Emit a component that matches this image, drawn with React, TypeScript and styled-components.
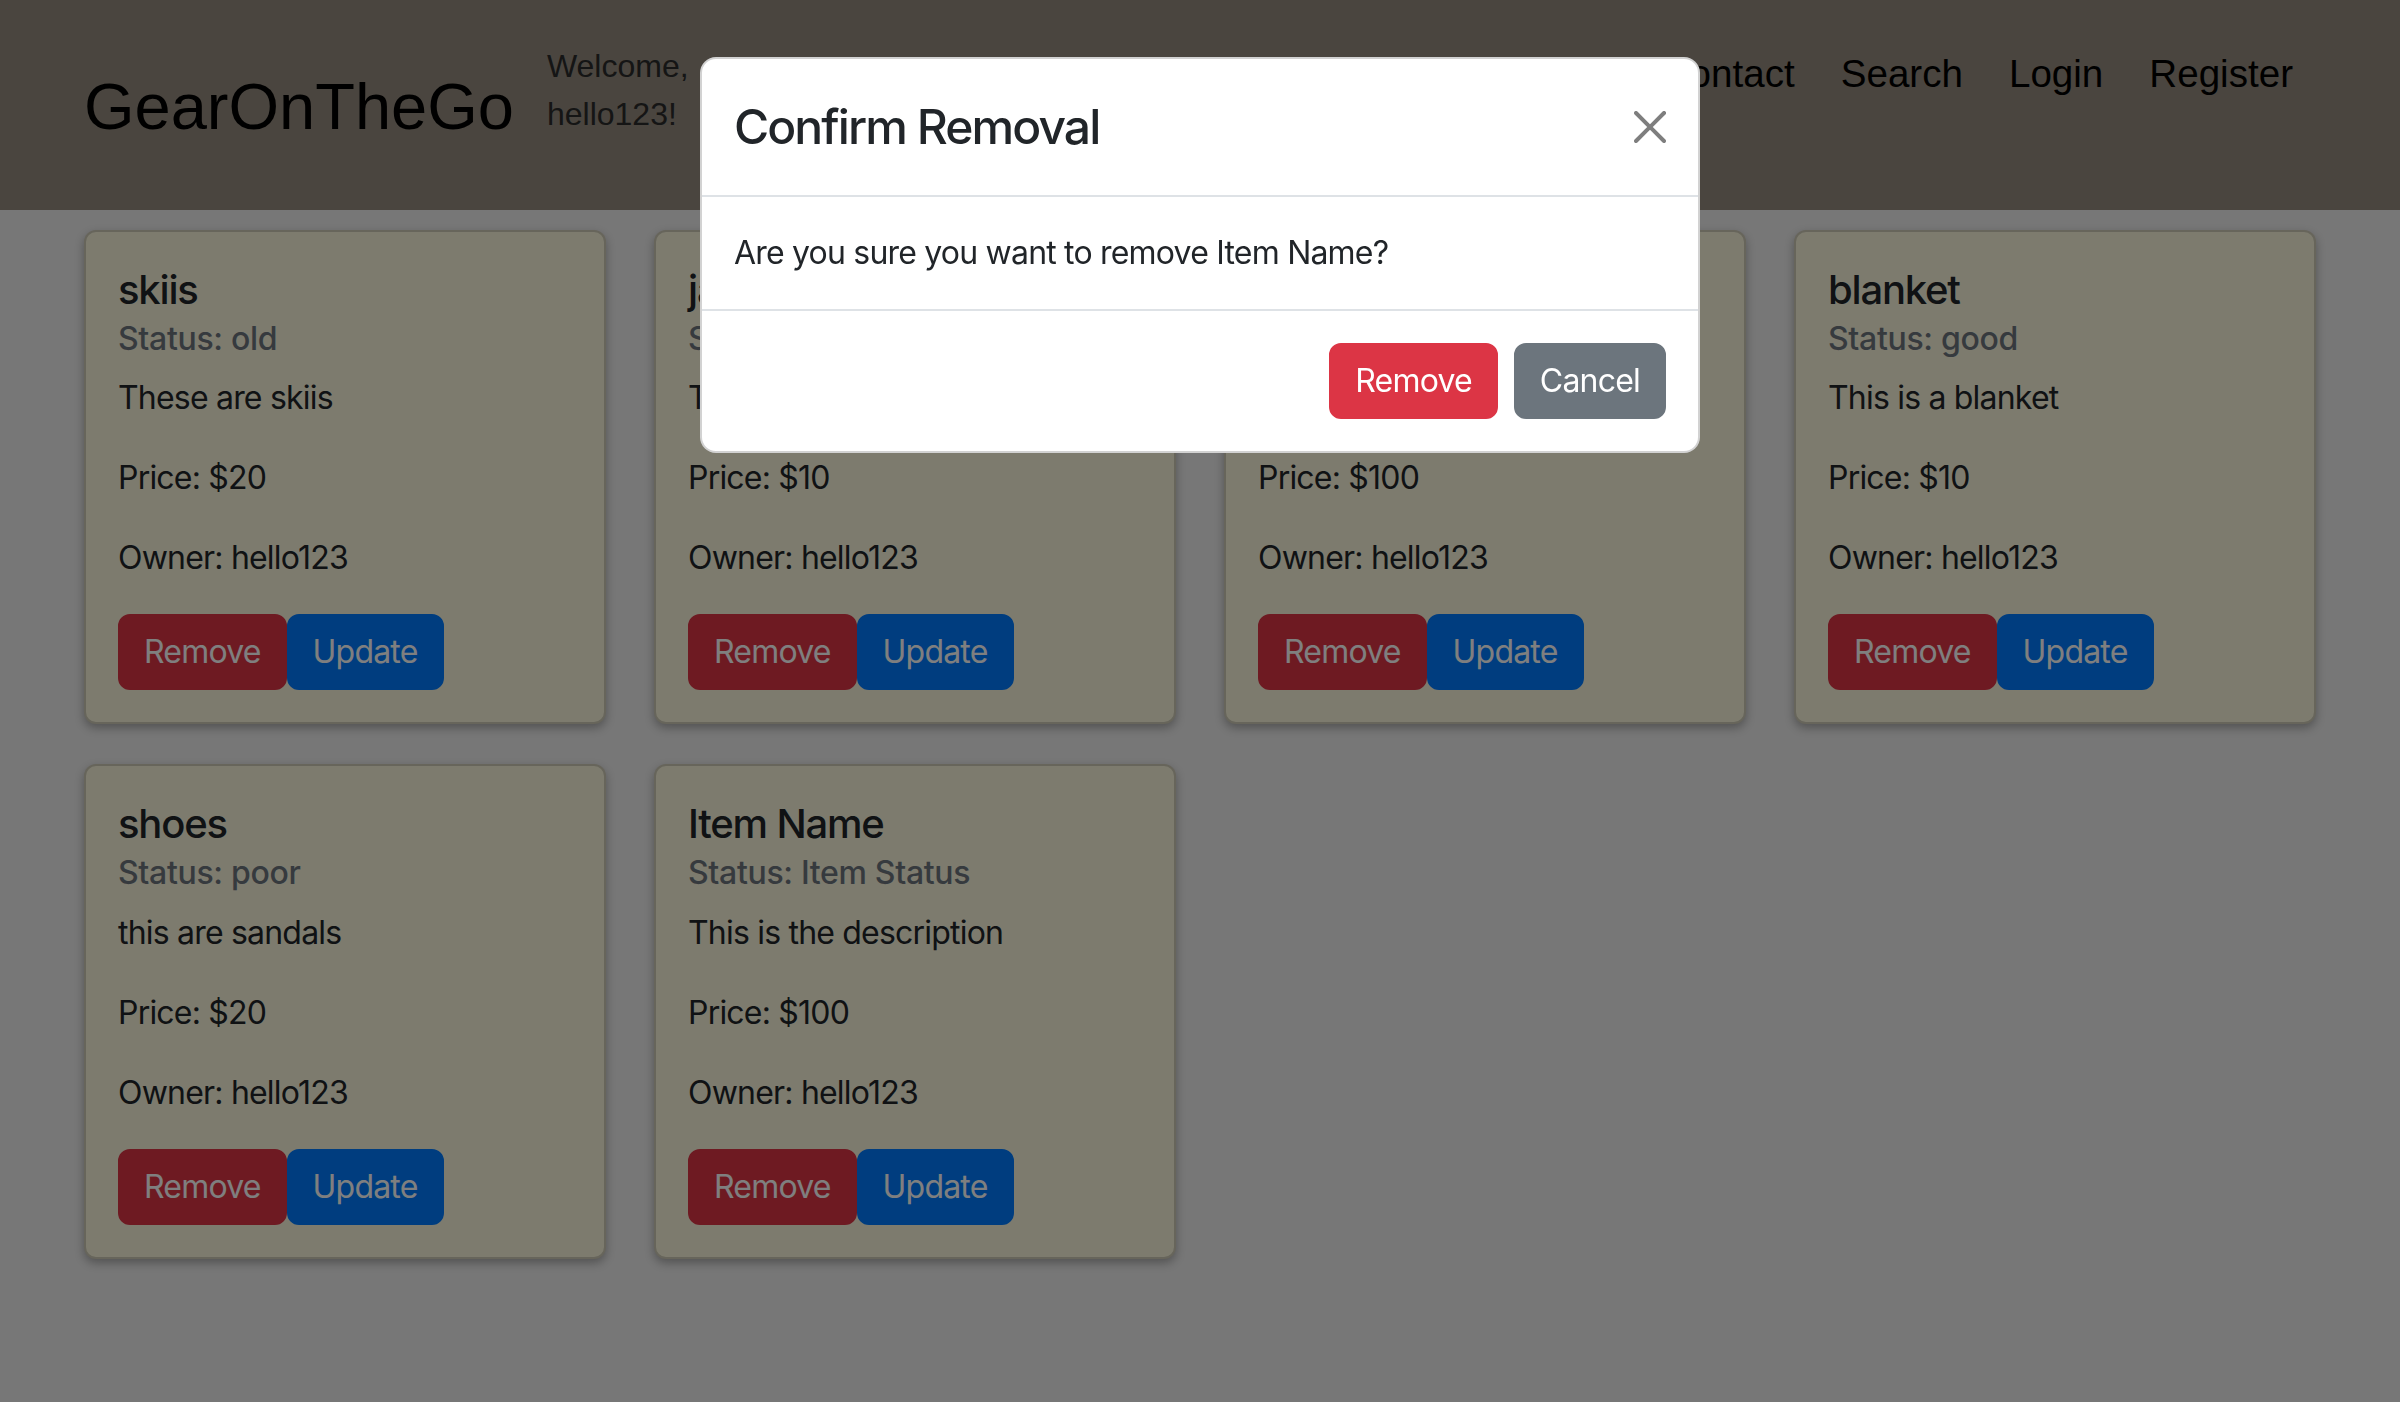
import React from "react";
import styled, { createGlobalStyle } from "styled-components";

const GlobalStyle = createGlobalStyle`
  html, body {
    margin: 0;
    padding: 0;
  }
  body {
    background: #eeeeee;
    color: #212529;
    font-family: Inter, "Noto Sans", "Liberation Sans", sans-serif;
    font-size: 32px;
    line-height: 1.5;
    letter-spacing: -0.025em;
  }
  * { box-sizing: border-box; }
`;

const Header = styled.header`
  height: 210px;
  background: #948a7e;
  display: flex;
  align-items: flex-start;
  padding: 0 84px;
  font-family: "Liberation Sans", Arial, sans-serif;
  letter-spacing: 0;
`;

const Logo = styled.div`
  align-self: center;
  margin-top: 4px;
  font-size: 65px;
  line-height: 1.2;
  color: #000;
  white-space: nowrap;
`;

const Welcome = styled.div`
  margin: 42px 0 0 33px;
  width: 160px;
  font-size: 32px;
  line-height: 48px;
  color: #2a2a2a;
`;

const Nav = styled.nav`
  margin: 44px 0 0 auto;
  display: flex;
`;

const NavLink = styled.a`
  padding: 0 23px;
  font-size: 38.6px;
  line-height: 60px;
  color: #000;
  text-decoration: none;
  white-space: nowrap;
`;

const Main = styled.main`
  display: grid;
  grid-template-columns: repeat(4, 522px);
  column-gap: 48px;
  row-gap: 40px;
  padding: 20px 84px 40px;
`;

const Card = styled.div`
  background: #faf6dd;
  border: 2px solid rgba(0, 0, 0, 0.175);
  border-radius: 12px;
  box-shadow: 0 4px 10px rgba(0, 0, 0, 0.3);
  padding: 32px;
`;

const CardTitle = styled.h5`
  margin: 2px 0 14px;
  font-size: 40px;
  font-weight: 500;
  line-height: 1.2;
  letter-spacing: -0.03em;
  color: #212529;
`;

const CardSubtitle = styled.h6`
  margin: -8px 0 16px;
  font-size: 32px;
  font-weight: 500;
  line-height: 1.2;
  letter-spacing: -0.01em;
  color: #6c757d;
`;

const CardText = styled.p`
  margin: 0 0 32px;
  font-size: 32px;
  line-height: 1.5;
`;

const ButtonRow = styled.div`
  display: flex;
`;

const variants: Record<string, string> = {
  danger: "#dc3545",
  primary: "#007bff",
  secondary: "#6c757d",
};

const Button = styled.button<{ $variant: "danger" | "primary" | "secondary"; $spaced?: boolean }>`
  font-family: inherit;
  font-size: 32px;
  line-height: 1.5;
  letter-spacing: -0.025em;
  font-weight: 400;
  padding: 12px 24px;
  border-radius: 12px;
  border: 2px solid ${(p) => variants[p.$variant]};
  background: ${(p) => variants[p.$variant]};
  color: #fff;
  margin: ${(p) => (p.$spaced ? "8px" : "0")};
  cursor: pointer;
`;

const Backdrop = styled.div`
  position: fixed;
  inset: 0;
  background: rgba(0, 0, 0, 0.5);
  z-index: 1050;
`;

const ModalWrap = styled.div`
  position: fixed;
  inset: 0;
  z-index: 1055;
`;

const Dialog = styled.div`
  width: 1000px;
  margin: 57px auto;
  background: #fff;
  border: 2px solid rgba(0, 0, 0, 0.175);
  border-radius: 16px;
  overflow: hidden;
`;

const ModalHeader = styled.div`
  display: flex;
  align-items: center;
  padding: 32px;
  border-bottom: 2px solid #dee2e6;
`;

const ModalTitle = styled.div`
  font-size: 48px;
  font-weight: 500;
  line-height: 1.5;
  letter-spacing: -0.04em;
  color: #212529;
`;

const CloseButton = styled.button`
  margin-left: auto;
  width: 32px;
  height: 32px;
  padding: 0;
  border: 0;
  background: transparent;
  opacity: 0.5;
  display: flex;
  cursor: pointer;
`;

const ModalBody = styled.div`
  padding: 32px;
  font-size: 32px;
  line-height: 48px;
`;

const ModalFooter = styled.div`
  display: flex;
  justify-content: flex-end;
  padding: 24px;
  border-top: 2px solid #dee2e6;
`;

type Item = { name: string; status: string; desc: string; price: string };

const items: Item[] = [
  { name: "skiis", status: "old", desc: "These are skiis", price: "$20" },
  { name: "jacket", status: "new", desc: "This is a jacket", price: "$10" },
  { name: "tent", status: "good", desc: "This is a tent", price: "$100" },
  { name: "blanket", status: "good", desc: "This is a blanket", price: "$10" },
  { name: "shoes", status: "poor", desc: "this are sandals", price: "$20" },
  { name: "Item Name", status: "Item Status", desc: "This is the description", price: "$100" },
];

export default function App() {
  return (
    <>
      <GlobalStyle />
      <Header>
        <Logo>GearOnTheGo</Logo>
        <Welcome>Welcome, hello123!</Welcome>
        <Nav>
          <NavLink href="#">Home</NavLink>
          <NavLink href="#">About</NavLink>
          <NavLink href="#">Contact</NavLink>
          <NavLink href="#">Search</NavLink>
          <NavLink href="#">Login</NavLink>
          <NavLink href="#">Register</NavLink>
        </Nav>
      </Header>
      <Main>
        {items.map((it) => (
          <Card key={it.name}>
            <CardTitle>{it.name}</CardTitle>
            <CardSubtitle>Status: {it.status}</CardSubtitle>
            <CardText>{it.desc}</CardText>
            <CardText>Price: {it.price}</CardText>
            <CardText>Owner: hello123</CardText>
            <ButtonRow>
              <Button $variant="danger">Remove</Button>
              <Button $variant="primary">Update</Button>
            </ButtonRow>
          </Card>
        ))}
      </Main>
      <Backdrop />
      <ModalWrap>
        <Dialog>
          <ModalHeader>
            <ModalTitle>Confirm Removal</ModalTitle>
            <CloseButton aria-label="Close">
              <svg width="32" height="32" viewBox="0 0 16 16">
                <path
                  fill="#000"
                  d="M.293.293a1 1 0 0 1 1.414 0L8 6.586 14.293.293a1 1 0 1 1 1.414 1.414L9.414 8l6.293 6.293a1 1 0 0 1-1.414 1.414L8 9.414l-6.293 6.293a1 1 0 0 1-1.414-1.414L6.586 8 .293 1.707a1 1 0 0 1 0-1.414z"
                />
              </svg>
            </CloseButton>
          </ModalHeader>
          <ModalBody>Are you sure you want to remove Item Name?</ModalBody>
          <ModalFooter>
            <Button $variant="danger" $spaced>Remove</Button>
            <Button $variant="secondary" $spaced>Cancel</Button>
          </ModalFooter>
        </Dialog>
      </ModalWrap>
    </>
  );
}
